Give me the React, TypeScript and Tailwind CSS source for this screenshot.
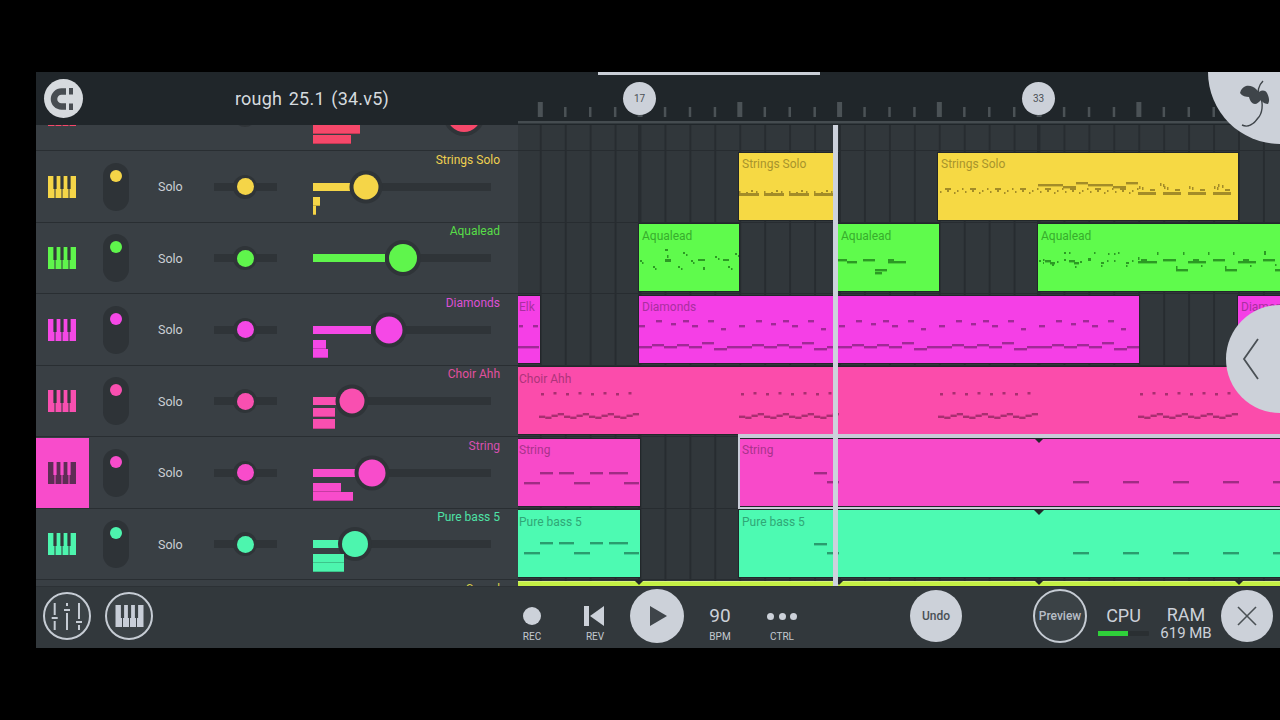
import type React from "react";

type Note = [number, number, number, number?];

const range = (n: number) => Array.from({ length: n }, (_, i) => i);

const Piano = ({ keyColor, gap, className }: { keyColor: string; gap: string; className?: string }) => (
  <svg viewBox="0 0 28 22" className={className ?? "w-[28px] h-[22px]"}>
    <rect width="28" height="22" fill={keyColor} />
    {[7, 14, 21].map((x) => (
      <g key={x}>
        <rect x={x - 1.6} y="0" width="3.2" height="13" fill={gap} />
        <rect x={x - 0.5} y="13" width="1" height="9" fill={gap} />
      </g>
    ))}
  </svg>
);

const Notes = ({ notes, color }: { notes: Note[]; color: string }) => (
  <svg className="absolute left-0 top-0 w-[800px] h-[70px] pointer-events-none">
    {notes.map(([x, y, w, h], i) => (
      <rect key={i} x={x} y={y} width={w} height={h ?? 2.4} fill={color} />
    ))}
  </svg>
);

const stringsBar: Note[] = [
  [0, 38, 1.5, 2], [7, 39, 2, 2], [12, 37, 2, 2], [17, 38, 1.5, 2],
];
const stringsClip1: Note[] = range(4).flatMap((i) => [
  [i * 25, 40, 20, 3] as Note,
  ...stringsBar.map(([x, y, w, h]) => [x + i * 25, y, w, h] as Note),
]);

const stringsClip2: Note[] = [
  ...range(8).flatMap((i) => [
    [7 + i * 25, 35, 6, 2] as Note,
    [9 + i * 25, 37, 2, 2] as Note,
    [2 + i * 25, 38, 1.5, 2] as Note,
    [16 + i * 25, 39, 1.5, 2] as Note,
    [19 + i * 25, 37, 1.5, 2] as Note,
    [24 + i * 25, 35, 1.5, 2] as Note,
  ]),
  [100, 31, 25], [125, 33, 13], [138, 29, 12], [150, 31, 25], [175, 33, 13], [188, 29, 12],
  ...range(4).flatMap((i) => [
    [200 + i * 25, 39, 18, 3] as Note,
    [212 + i * 25, 36, 5, 2] as Note,
    [201 + i * 25, 33, 1.5, 3] as Note,
    [204 + i * 25, 34, 1.5, 3] as Note,
  ]),
  [222, 30, 1.5, 3], [225, 31, 1.5, 3], [280, 31, 1.5, 3], [284, 32, 1.5, 3],
];

const aquaClip1: Note[] = [
  [1, 36, 2, 2], [3, 38, 1.5, 2], [14, 42, 2, 2], [16, 44, 1.5, 2], [26, 25, 3, 2], [26, 35, 6, 3], [28, 31, 1.5, 3],
  [39, 42, 2, 2], [42, 44, 1.5, 2], [44, 28, 2, 2], [47, 30, 1.5, 2], [52, 36, 2, 2], [54, 38, 1.5, 2],
  [59, 35, 7, 2], [64, 43, 2, 3], [76, 32, 2, 2], [79, 34, 1.5, 2], [84, 35, 6, 2], [89, 42, 2, 2], [92, 44, 1.5, 2],
  [96, 29, 2, 2], [99, 31, 1.5, 2],
];
const aquaClip2: Note[] = [
  [0, 35, 9], [9, 37, 10], [25, 35, 12], [50, 35, 6], [50, 37, 18], [37, 45, 12], [37, 48, 7],
];
const aquaClip3: Note[] = [
  [1, 36, 2, 2], [5, 35, 1.5, 2], [5, 38, 1, 2], [7, 36, 6], [12, 38, 5], [14, 40, 2, 2], [19, 37, 1.5, 2],
  [26, 35, 2, 2], [26, 28, 2, 2], [31, 28, 1.5, 2], [31, 36, 6], [36, 38, 5], [37, 42, 1.5, 2], [42, 37, 2, 2],
  [50, 34, 3, 3], [56, 28, 1.5, 2], [70, 29, 1.5, 2], [76, 29, 1.5, 2], [80, 28, 1.5, 2],
  [63, 38, 3, 2], [63, 41, 1.5, 2], [69, 36, 1.5, 2], [76, 36, 1.5, 2], [88, 38, 3, 2], [88, 41, 1.5, 2], [94, 36, 1.5, 2],
  [100, 37, 19], [103, 35, 6], [100, 33, 1.5, 3], [125, 35, 13], [119, 28, 1.5, 3], [138, 45, 12], [138, 42, 1.5, 3],
  [145, 28, 1.5, 3], [150, 37, 18], [155, 35, 6], [163, 41, 1.5, 2],
  [175, 35, 12], [170, 28, 1.5, 3], [187, 45, 12], [187, 42, 1.5, 3], [195, 28, 1.5, 3],
  [200, 37, 18], [205, 35, 6], [212, 41, 1.5, 2], [225, 35, 12], [226, 27, 2, 4], [237, 45, 5], [237, 40, 1.5, 2],
];

const diamondsTop: Note[] = [
  [0, 29, 6], [17, 24, 6], [32, 27, 5], [44, 24, 6], [53, 29, 6], [69, 24, 6], [82, 32, 5],
];
const diamondsWave: Note[] = [
  [13, 48, 12], [25, 50, 13], [38, 48, 12], [50, 50, 13], [63, 46, 12], [75, 52, 13], [88, 50, 25],
];
const diamondsClip: Note[] = [
  ...range(5).flatMap((i) => diamondsTop.map(([x, y, w]) => [x + i * 100, y, w] as Note)),
  ...range(5).flatMap((i) =>
    diamondsWave.map(([x, y, w]) => [x + i * 100, y, x + i * 100 + w > 500 ? 500 - x - i * 100 : w] as Note),
  ),
  [0, 50, 13],
];

const choirWave = [3.6, 4.6, 2.6, 1];
const choirClip: Note[] = [21, 221, 420, 620].flatMap((start) => [
  ...range(8).map((i) => [start + 2 + i * 12.5, i % 2 ? 25 : 26, 3, 2.5] as Note),
  ...range(16).map((i) => [start + i * 6.25, 45 + choirWave[i % 4], 6.25] as Note),
]);

const bassPattern = (y: number): Note[] => [
  [6, y + 10, 16], [22, y, 13], [41, y, 15], [56, y + 10, 16], [72, y, 13], [91, y, 19], [106, y + 10, 15],
];
const tailPattern = (y: number): Note[] => [
  [75, y - 9, 13], [88, y, 12], [334, y, 16], [384, y, 16], [434, y, 16], [484, y, 16], [534, y, 16],
];

const Clip = ({
  left,
  width,
  color,
  text,
  label,
  noteColor,
  notes = [],
}: {
  left: number;
  width: number;
  color: string;
  text: string;
  label?: string;
  noteColor?: string;
  notes?: Note[];
}) => (
  <div
    className={`absolute top-[1.5px] bottom-[2px] overflow-hidden outline outline-1 outline-[#22272a] ${color}`}
    style={{ left, width }}
  >
    <Notes notes={notes} color={noteColor ?? "#000"} />
    {label && (
      <span
        className={`absolute top-[3.5px] text-[12px] leading-[16px] whitespace-nowrap ${left === 0 ? "left-[1px]" : "left-[3px]"} ${text}`}
      >
        {label}
      </span>
    )}
  </div>
);

const tracks = [
  { name: "", key: "#f6486a", label: "text-[#f6486a]", knob: 151, size: 34, fill: 0, partial: true, blocks: [[45.5, 47, 9], [55.5, 38, 9]] },
  { name: "Strings Solo", key: "#f5d548", label: "text-[#efd150]", knob: 53, size: 25, fill: 37, blocks: [[46, 7, 9], [55, 3, 9]] },
  { name: "Aqualead", key: "#5ff54c", label: "text-[#58dd48]", knob: 90, size: 28, fill: 72, blocks: [] },
  { name: "Diamonds", key: "#f548e6", label: "text-[#dc50d4]", knob: 76, size: 27, fill: 58, blocks: [[46, 13, 9], [55, 15, 9]] },
  { name: "Choir Ahh", key: "#f94fb0", label: "text-[#e24f9f]", knob: 39, size: 25, fill: 24, blocks: [[42, 22, 9], [53, 22, 10]] },
  { name: "String", key: "#f84ccb", label: "text-[#d750b0]", knob: 59, size: 27, fill: 42, blocks: [[46, 28, 9], [55, 40, 9]], selected: true },
  { name: "Pure bass 5", key: "#4df5ae", label: "text-[#4ee2a6]", knob: 42, size: 26, fill: 26, blocks: [[45.5, 31, 9], [54.5, 31, 9]] },
  { name: "Sound", key: "#c8f040", label: "text-[#d8d048]", knob: 80, size: 25, fill: 60, partial: true, blocks: [] },
];

const TrackRow = ({ t }: { t: (typeof tracks)[number] }) => (
  <div className="relative flex h-[71.5px] flex-none items-center border-b border-[#292e32] pt-[1px]">
    <div className={`flex h-full w-[53px] items-center justify-center ${t.selected ? "bg-[#f84ccb]" : ""}`}>
      <div className="-ml-[1px]">
        <Piano keyColor={t.selected ? "#5e2d55" : t.key} gap={t.selected ? "#f84ccb" : "#33383b"} />
      </div>
    </div>
    <div className={`relative ml-[14px] h-[48px] w-[26px] rounded-full ${t.partial ? "" : "bg-[#2e3337]"}`}>
      {!t.partial && (
        <div className="absolute left-[7px] top-[7px] size-[12px] rounded-full" style={{ background: t.key }} />
      )}
    </div>
    <span className="ml-[29px] w-[25px] pt-[2px] text-[12.5px] text-[#cbd0d5]">{t.partial ? "" : "Solo"}</span>
    <div className="relative ml-[31px] h-[8px] w-[63px] bg-[#2f3438]">
      <div className="absolute left-[19px] top-[-8px] flex size-[24px] items-center justify-center rounded-full bg-[#2f3438]">
        <div className="size-[17px] rounded-full" style={{ background: t.key }} />
      </div>
    </div>
    <div className="relative ml-[36px] h-[8px] w-[178px] bg-[#2f3438]">
      <div className="absolute left-0 top-0 h-[8px]" style={{ width: t.fill, background: t.key }} />
      <div
        className="absolute top-[4px] flex -translate-x-1/2 -translate-y-1/2 items-center justify-center rounded-full bg-[#2f3438]"
        style={{ left: t.knob, width: t.size + 8, height: t.size + 8 }}
      >
        <div className="rounded-full" style={{ width: t.size, height: t.size, background: t.key }} />
      </div>
    </div>
    {t.blocks.map(([top, w, h], i) => (
      <div
        key={i}
        className="absolute left-[277px] border-b border-[#00000033]"
        style={{ top, width: w, height: h, background: t.key }}
      />
    ))}
    <span className={`absolute right-[18px] top-[0.5px] text-[12px] leading-[16px] ${t.label}`}>{t.name}</span>
  </div>
);

const PlaylistRow = ({ children }: { children?: React.ReactNode }) => (
  <div className="relative h-[71.5px] flex-none border-b border-[#272c30]">{children}</div>
);

const Marker = ({ left, top }: { left: number; top: number }) => (
  <svg className="absolute" style={{ left: left - 5, top }} width="10" height="5">
    <polygon points="0,0 10,0 5,5" fill="#23282b" />
  </svg>
);

const TransportLabel = ({ children }: { children: React.ReactNode }) => (
  <span className="text-[10px] leading-[12px] text-[#c3c9d0]">{children}</span>
);

export default function App() {
  return (
    <div className="h-[720px] w-[1280px] overflow-hidden bg-black pl-[36px] pt-[72px] font-[Roboto,sans-serif]">
      <div className="relative flex h-[576px] w-[1244px] flex-col overflow-hidden bg-[#32383c]">
        {/* top bar */}
        <header className="relative z-10 flex h-[53px] flex-none bg-[#20262a]">
          <div className="flex w-[482px] items-center">
            <button className="ml-[7.5px] flex size-[39px] items-center justify-center rounded-full bg-[#d6dade]">
              <svg viewBox="0 0 26 26" className="size-[26px]">
                <path d="M16 5.5 H11.5 A7.5 7.5 0 0 0 11.5 20.5 H16" fill="none" stroke="#484d52" strokeWidth="6.5" />
                <rect x="19" y="2" width="4" height="6.5" fill="#484d52" />
                <rect x="19" y="17.5" width="4" height="6.5" fill="#484d52" />
              </svg>
            </button>
            <span className="ml-[152.5px] text-[18px] tracking-[0.2px] text-[#d5dade] [word-spacing:2px]">rough 25.1 (34.v5)</span>
          </div>
          <div className="relative flex-1">
            <div className="absolute left-[80px] top-0 h-[3px] w-[222px] bg-[#c9ced6]" />
            <svg className="absolute left-0 top-0" width="762" height="53">
              {range(30).map((i) => {
                const x = 22.3 + i * 24.94;
                const big = i % 4 === 0;
                return big ? (
                  <rect key={i} x={x - 2.5} y="30" width="5" height="15" fill="#4b5256" />
                ) : (
                  <rect key={i} x={x - 1.2} y="35" width="2.5" height="10" fill="#4b5256" />
                );
              })}
              <rect x="0" y="49" width="762" height="2.5" fill="#454c50" />
            </svg>
            <div className="absolute left-[105px] top-[10px] flex size-[33px] items-center justify-center rounded-full bg-[#ccd1d9] text-[10px] text-[#4a5055]">17</div>
            <div className="absolute left-[504px] top-[10px] flex size-[33px] items-center justify-center rounded-full bg-[#ccd1d9] text-[10px] text-[#4a5055]">33</div>
          </div>
        </header>

        {/* tracks and playlist */}
        <div className="flex min-h-0 flex-1 overflow-hidden">
          <div className="flex w-[482px] flex-none flex-col overflow-hidden bg-[#393f44]">
            <div className="-mt-[45.5px] flex flex-col">
              {tracks.map((t) => (
                <TrackRow key={t.name} t={t} />
              ))}
            </div>
          </div>
          <div className="relative flex-1 overflow-hidden bg-[#31373b] bg-[linear-gradient(90deg,#272c30_1.5px,transparent_1.5px)] bg-[size:24.94px_100%] bg-[position:-3.2px_0]">
            <div className="absolute inset-y-0 left-[120px] w-[2.5px] bg-[#272c30]" />
            <div className="absolute inset-y-0 left-[519px] w-[2.5px] bg-[#272c30]" />
            <div className="-mt-[45.5px] flex flex-col">
              <PlaylistRow />
              <PlaylistRow>
                <Clip left={221} width={99} color="bg-[#f6d944]" text="text-[#a8942c]" label="Strings Solo" noteColor="#a38c28" notes={stringsClip1} />
                <Clip left={420} width={300} color="bg-[#f6d944]" text="text-[#a8942c]" label="Strings Solo" noteColor="#a38c28" notes={stringsClip2} />
              </PlaylistRow>
              <PlaylistRow>
                <Clip left={121} width={100} color="bg-[#5ffb4c]" text="text-[#37ad2c]" label="Aqualead" noteColor="#2c9a24" notes={aquaClip1} />
                <Clip left={320} width={101} color="bg-[#5ffb4c]" text="text-[#37ad2c]" label="Aqualead" noteColor="#2c9a24" notes={aquaClip2} />
                <Clip left={520} width={242} color="bg-[#5ffb4c]" text="text-[#37ad2c]" label="Aqualead" noteColor="#2c9a24" notes={aquaClip3} />
              </PlaylistRow>
              <PlaylistRow>
                <Clip left={0} width={22} color="bg-[#f53fe6]" text="text-[#a92f9f]" label="Elk" noteColor="#a02a96" notes={[[1, 29, 4], [15, 29, 5], [0, 50, 21]]} />
                <Clip left={121} width={500} color="bg-[#f53fe6]" text="text-[#a92f9f]" label="Diamonds" noteColor="#a02a96" notes={diamondsClip} />
                <Clip left={720} width={42} color="bg-[#f53fe6]" text="text-[#a92f9f]" label="Diamonds" />
              </PlaylistRow>
              <PlaylistRow>
                <Clip left={0} width={762} color="bg-[#fb4cab]" text="text-[#ad347a]" label="Choir Ahh" noteColor="#a82f70" notes={choirClip} />
              </PlaylistRow>
              <PlaylistRow>
                <Clip left={0} width={122} color="bg-[#f84ac9]" text="text-[#a9338c]" label="String" noteColor="#a02c84" notes={bassPattern(33)} />
                <Clip left={221} width={541} color="bg-[#f84ac9]" text="text-[#a9338c]" label="String" noteColor="#a02c84" notes={tailPattern(42)} />
                <div className="absolute left-[220px] right-0 -top-[3px] h-[4px] bg-[#c9ccd8]" />
                <div className="absolute left-[220px] -top-[3px] bottom-0 w-[2px] bg-[#c9ccd8]" />
                <div className="absolute left-[220px] right-0 bottom-[-2.5px] h-[3.5px] bg-[#c9ccd8]" />
                <Marker left={521} top={1} />
              </PlaylistRow>
              <PlaylistRow>
                <Clip left={0} width={122} color="bg-[#4dfab2]" text="text-[#30a777]" label="Pure bass 5" noteColor="#2a9c6e" notes={bassPattern(32)} />
                <Clip left={221} width={541} color="bg-[#4dfab2]" text="text-[#30a777]" label="Pure bass 5" noteColor="#2a9c6e" notes={tailPattern(42)} />
                <Marker left={521} top={1} />
              </PlaylistRow>
              <PlaylistRow>
                <div className="absolute left-0 right-0 top-[1px] h-[5px] border-t border-[#d8f47a] bg-[#c4f044]" />
                <Marker left={121} top={0} />
                <Marker left={321} top={0} />
                <Marker left={521} top={0} />
                <Marker left={721} top={0} />
              </PlaylistRow>
            </div>
            <div className="absolute inset-y-0 left-[315px] w-[5px] bg-[#cdd2dc]" />
          </div>
        </div>

        {/* transport */}
        <footer className="z-10 flex h-[62px] flex-none items-center border-t border-[#2c3135] bg-[#32383c] pb-[3px]">
          <button className="ml-[7px] flex size-[48px] items-center justify-center rounded-full border-2 border-[#c6ccd4] bg-[#3b4246]">
            <svg width="44" height="44" viewBox="0 0 44 44" fill="#c6ccd4">
              <rect x="8.7" y="9" width="2" height="12" />
              <rect x="6.7" y="23" width="6" height="2" />
              <rect x="8.7" y="27" width="2" height="9" />
              <rect x="21" y="9" width="2" height="3" />
              <rect x="19" y="15" width="6" height="2" />
              <rect x="21" y="19" width="2" height="17" />
              <rect x="33" y="9" width="2" height="16" />
              <rect x="31" y="27" width="6" height="2" />
              <rect x="33" y="31" width="2" height="5" />
            </svg>
          </button>
          <button className="ml-[14px] flex size-[48px] items-center justify-center rounded-full border-2 border-[#c6ccd4] bg-[#3b4246]">
            <Piano keyColor="#c8ced8" gap="#3b4246" className="h-[22px] w-[29px]" />
          </button>
          <div className="ml-[359px] mt-[12px] flex w-[40px] flex-col items-center">
            <div className="my-[6px] size-[18px] rounded-full bg-[#ccd1d9]" />
            <TransportLabel>REC</TransportLabel>
          </div>
          <div className="ml-[23px] mt-[12px] flex w-[40px] flex-col items-center">
            <svg width="22" height="30" viewBox="0 0 22 30" fill="#ccd1d9" className="-ml-[2px]">
              <rect x="1" y="5" width="5" height="20" />
              <polygon points="21,5 21,25 7,15" />
            </svg>
            <TransportLabel>REV</TransportLabel>
          </div>
          <button className="ml-[15px] flex size-[54px] items-center justify-center rounded-full bg-[#ccd1d9]">
            <svg width="18" height="20" viewBox="0 0 18 20" className="ml-[3px]">
              <polygon points="0,0 17,10 0,20" fill="#3f454a" />
            </svg>
          </button>
          <div className="ml-[16px] mt-[12px] flex w-[40px] flex-col items-center">
            <span className="text-[19px] leading-[30px] text-[#ccd1d9]">90</span>
            <TransportLabel>BPM</TransportLabel>
          </div>
          <div className="ml-[22px] mt-[12px] flex w-[40px] flex-col items-center">
            <div className="flex h-[30px] items-center gap-[4.5px]">
              <div className="size-[7px] rounded-full bg-[#ccd1d9]" />
              <div className="size-[7px] rounded-full bg-[#ccd1d9]" />
              <div className="size-[7px] rounded-full bg-[#ccd1d9]" />
            </div>
            <TransportLabel>CTRL</TransportLabel>
          </div>
          <button className="ml-[108px] flex size-[52px] items-center justify-center rounded-full bg-[#ccd1d9] text-[12px] font-medium text-[#4a5055]">Undo</button>
          <button className="ml-[71px] flex size-[54px] items-center justify-center rounded-full border-2 border-[#c6ccd4] bg-[#3b4246] text-[12px] font-medium text-[#b8bec6]">Preview</button>
          <div className="ml-[11px] mt-[7px] flex w-[51px] flex-col items-center">
            <span className="text-[18px] leading-[24px] text-[#ccd1d9]">CPU</span>
            <div className="mt-[3px] h-[5px] w-[51px] rounded-[1px] bg-[#2a2f32]">
              <div className="h-full w-[30px] bg-[#2fd13a]" />
            </div>
          </div>
          <div className="ml-[11px] mt-[14px] flex w-[52px] flex-col items-center">
            <span className="text-[18px] leading-[20px] text-[#ccd1d9]">RAM</span>
            <span className="whitespace-nowrap text-[15px] leading-[16px] text-[#ccd1d9]">619 MB</span>
          </div>
          <button className="ml-[9px] flex size-[52px] items-center justify-center rounded-full bg-[#ccd1d9]">
            <svg width="22" height="22" viewBox="0 0 22 22" stroke="#4a5055" strokeWidth="1.6">
              <line x1="2" y1="2" x2="20" y2="20" />
              <line x1="20" y1="2" x2="2" y2="20" />
            </svg>
          </button>
        </footer>

        {/* floating round buttons */}
        <div className="absolute left-[1172px] top-[-72px] z-20 size-[144px] rounded-full bg-[#ccd1d9]">
          <svg className="absolute left-0 top-[72px]" width="72" height="72" viewBox="0 0 72 72">
            <path d="M55 9 C50 14 49 20 52 24 C56 32 54 42 50 46 C46 52 40 56 34 53" fill="none" stroke="#3f454a" strokeWidth="1.4" />
            <path d="M32 21 C33 17 35 15 38 14 C42 13 46 15 48 17 L51 20 C54 18 57 18 59 21 C61 25 62 29 60 32 C58 32 55 31 53 28 C51 30 49 32 47 32 C44 32 42 29 41 25 C38 25 34 24 32 21 Z" fill="#3f454a" />
          </svg>
        </div>
        <div className="absolute left-[1190px] top-[233px] z-20 size-[108px] rounded-full bg-[#ccd1d9]">
          <svg className="absolute left-[15px] top-[32px]" width="20" height="44" viewBox="0 0 20 44" fill="none" stroke="#4a5055" strokeWidth="1.8">
            <polyline points="17,2 3,22 17,42" />
          </svg>
        </div>
      </div>
    </div>
  );
}
